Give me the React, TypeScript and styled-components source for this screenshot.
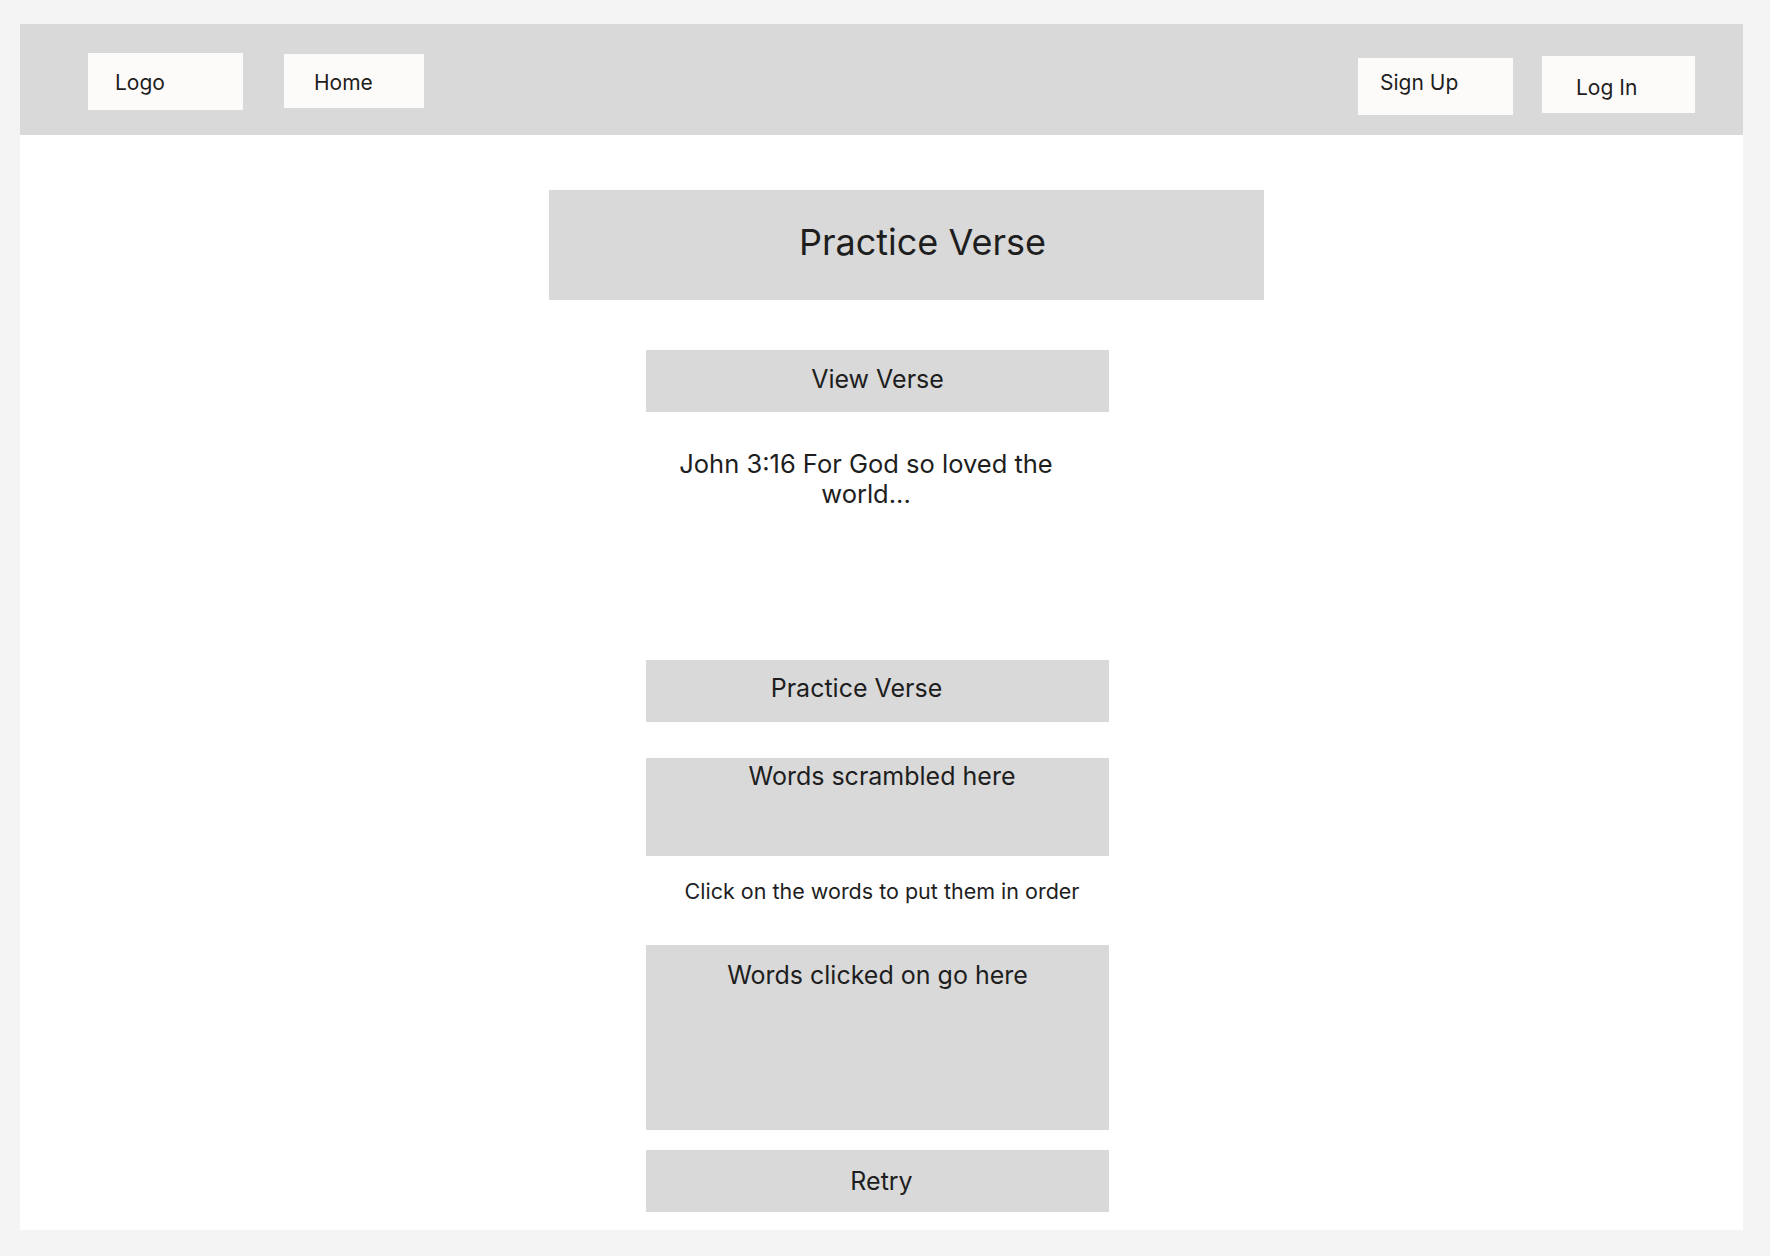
import React from 'react'
import styled, { createGlobalStyle } from 'styled-components'

const Global = createGlobalStyle`
  html, body {
    margin: 0;
    padding: 0;
    background: #f4f4f4;
  }
  body {
    font-family: Inter, "Noto Sans", sans-serif;
    color: #1e1e1e;
  }
`

type NavProps = { $top: number; $w: number; $h: number; $pl: number; $pt: number }

const App = () => {
  return (
    <>
      <Global />
      <Page>
        <Frame>
          <NavBar>
            <NavGroup>
              <NavBox $top={29} $w={155} $h={57} $pl={27} $pt={16}>Logo</NavBox>
              <NavBox $top={30} $w={140} $h={54} $pl={30} $pt={15}>Home</NavBox>
            </NavGroup>
            <NavGroup $gap={29}>
              <NavBox $top={34} $w={155} $h={57} $pl={22} $pt={11}>Sign Up</NavBox>
              <NavBox $top={32} $w={153} $h={57} $pl={34} $pt={18}>Log In</NavBox>
            </NavGroup>
          </NavBar>
          <Main>
            <TitleBox>Practice Verse</TitleBox>
            <Button $shift={0}>View Verse</Button>
            <VerseText>John 3:16 For God so loved the world...</VerseText>
            <Button $shift={-42} $mt={151} $pb={6}>Practice Verse</Button>
            <WordBox $h={98} $pt={3} $pl={9} $mt={36}>Words scrambled here</WordBox>
            <Hint>Click on the words to put them in order</Hint>
            <WordBox $h={185} $pt={15} $mt={42}>Words clicked on go here</WordBox>
            <Button $shift={4} $mt={20} $pb={0}>Retry</Button>
          </Main>
        </Frame>
      </Page>
    </>
  )
}

export default App

const Page = styled.div`
  padding: 24px 27px 26px 20px;
`

const Frame = styled.div`
  width: 1723px;
  height: 1206px;
  background: #ffffff;
  display: flex;
  flex-direction: column;
`

const NavBar = styled.div`
  height: 111px;
  background: #d9d9d9;
  display: flex;
  justify-content: space-between;
  padding: 0 48px 0 68px;
  flex-shrink: 0;
`

const NavGroup = styled.div<{ $gap?: number }>`
  display: flex;
  align-items: flex-start;
  gap: ${p => p.$gap ?? 41}px;
`

const NavBox = styled.div<NavProps>`
  margin-top: ${p => p.$top}px;
  width: ${p => p.$w}px;
  height: ${p => p.$h}px;
  box-sizing: border-box;
  padding: ${p => p.$pt}px 0 0 ${p => p.$pl}px;
  background: #fdfbfa;
  font-size: 21px;
  line-height: 27px;
`

const Main = styled.div`
  display: flex;
  flex-direction: column;
  padding-left: 626px;
`

const TitleBox = styled.div`
  margin: 55px 0 0 -97px;
  width: 715px;
  height: 110px;
  background: #d9d9d9;
  display: flex;
  align-items: center;
  justify-content: center;
  padding: 0 0 6px 32px;
  box-sizing: border-box;
  font-size: 36px;
`

const Button = styled.div<{ $shift: number; $mt?: number; $pb?: number }>`
  margin-top: ${p => p.$mt ?? 50}px;
  width: 463px;
  height: 62px;
  background: #d9d9d9;
  display: flex;
  align-items: center;
  justify-content: center;
  box-sizing: border-box;
  padding-left: ${p => (p.$shift > 0 ? p.$shift * 2 : 0)}px;
  padding-right: ${p => (p.$shift < 0 ? -p.$shift : 0)}px;
  padding-bottom: ${p => p.$pb ?? 4}px;
  font-size: 25px;
`

const VerseText = styled.div`
  margin-top: 37px;
  width: 440px;
  text-align: center;
  font-size: 25.5px;
  line-height: 30px;
`

const WordBox = styled.div<{ $h: number; $pt: number; $mt: number; $pl?: number }>`
  margin-top: ${p => p.$mt}px;
  width: 463px;
  height: ${p => p.$h}px;
  box-sizing: border-box;
  padding-top: ${p => p.$pt}px;
  padding-left: ${p => p.$pl ?? 0}px;
  background: #d9d9d9;
  text-align: center;
  font-size: 25px;
  line-height: 30px;
`

const Hint = styled.div`
  margin-top: 23px;
  width: 472px;
  text-align: center;
  font-size: 21.5px;
  line-height: 24px;
`
